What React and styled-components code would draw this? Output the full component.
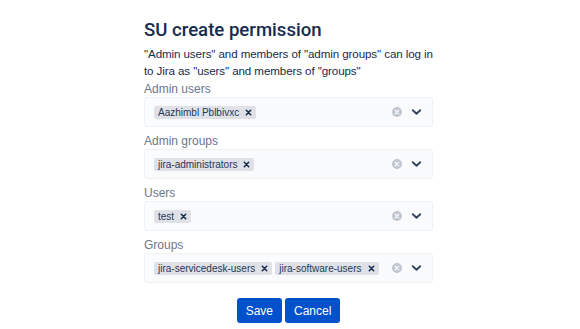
import React from 'react'
import styled, { createGlobalStyle } from 'styled-components'

const GlobalStyle = createGlobalStyle`
    body {
        margin: 0;
        background: #FFFFFF;
        font-family: "Liberation Sans", Arial, sans-serif;
        color: #172B4D;
    }
`

const Page = styled.div`
    width: 580px;
    height: 329px;
    padding: 18px 0 0 144px;
    box-sizing: border-box;
`

const Column = styled.div`
    width: 289px;
    display: flex;
    flex-direction: column;
`

const Title = styled.h3`
    margin: 0;
    font-family: Roboto, "Liberation Sans", sans-serif;
    font-size: 18.6px;
    line-height: 24px;
    font-weight: 500;
    color: #172B4D;
`

const Description = styled.p`
    margin: 3px 0 2px;
    font-size: 11.6px;
    letter-spacing: -0.1px;
    line-height: 17px;
    color: #172B4D;
`

const Field = styled.div`
    display: flex;
    flex-direction: column;
    margin-bottom: 6px;
`

const Label = styled.label`
    font-size: 12px;
    line-height: 16px;
    color: #6B778C;
`

const SelectBox = styled.div`
    height: 30px;
    box-sizing: border-box;
    display: flex;
    align-items: center;
    padding: 0 10px 0 9px;
    background: #FAFBFC;
    border: 1px solid #F1F2F4;
    border-radius: 3px;
`

const Values = styled.div`
    flex: 1;
    display: flex;
    gap: 3px;
`

const Tag = styled.span`
    display: inline-flex;
    align-items: center;
    height: 13px;
    padding: 0 4px 0 4px;
    gap: 6px;
    background: #DFE1E6;
    border-radius: 2px;
    font-size: 10px;
    color: #253858;
    white-space: nowrap;
`

const Remove = styled.svg`
    width: 7px;
    height: 7px;
    margin-top: 1px;
`

const Indicators = styled.div`
    display: flex;
    align-items: center;
    gap: 9px;
`

const ButtonRow = styled.div`
    display: flex;
    justify-content: center;
    gap: 3px;
    margin-top: 9px;
`

const Button = styled.button`
    height: 25px;
    padding: 0 9px;
    border: none;
    border-radius: 3px;
    background: #0052CC;
    color: #FFFFFF;
    font-family: inherit;
    font-size: 12px;
    cursor: pointer;
`

const RemoveIcon = () => (
    <Remove viewBox="0 0 8 8">
        <path d="M1.5 1.5 L6.5 6.5 M6.5 1.5 L1.5 6.5" stroke="#172B4D" strokeWidth="1.8" strokeLinecap="round" />
    </Remove>
)

const ClearIcon = () => (
    <svg width="10" height="10" viewBox="0 0 10 10">
        <circle cx="5" cy="5" r="5" fill="#C1C7D0" />
        <path d="M3.3 3.3 L6.7 6.7 M6.7 3.3 L3.3 6.7" stroke="#FAFBFC" strokeWidth="1.3" strokeLinecap="round" />
    </svg>
)

const ChevronIcon = () => (
    <svg width="11" height="8" viewBox="0 0 11 8">
        <path d="M1.8 2.2 L5.5 5.8 L9.2 2.2" fill="none" stroke="#344563" strokeWidth="1.9" strokeLinecap="round" strokeLinejoin="round" />
    </svg>
)

const MultiSelect = ({ label, values }) => (
    <Field>
        <Label>{label}</Label>
        <SelectBox>
            <Values>
                {values.map(value =>
                    <Tag key={value}>
                        {value}
                        <RemoveIcon />
                    </Tag>
                )}
            </Values>
            <Indicators>
                <ClearIcon />
                <ChevronIcon />
            </Indicators>
        </SelectBox>
    </Field>
)

const fields = [
    { label: 'Admin users', values: ['Aazhimbl Pblbivxc'] },
    { label: 'Admin groups', values: ['jira-administrators'] },
    { label: 'Users', values: ['test'] },
    { label: 'Groups', values: ['jira-servicedesk-users', 'jira-software-users'] },
]

export default function App() {
    return (
        <Page>
            <GlobalStyle />
            <Column>
                <Title>SU create permission</Title>
                <Description>
                    "Admin users" and members of "admin groups" can log in to Jira as "users" and members of "groups"
                </Description>
                {fields.map(field =>
                    <MultiSelect key={field.label} label={field.label} values={field.values} />
                )}
                <ButtonRow>
                    <Button>Save</Button>
                    <Button>Cancel</Button>
                </ButtonRow>
            </Column>
        </Page>
    )
}
